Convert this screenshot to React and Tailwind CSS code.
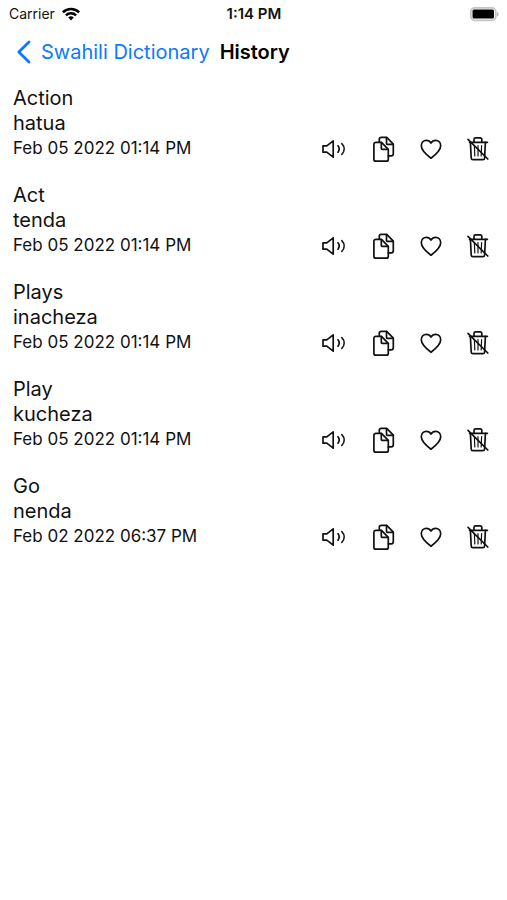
import React, { useState } from 'react';

const initialHistory = [
  { id: 1, word: 'Action', translation: 'hatua', date: 'Feb 05 2022 01:14 PM' },
  { id: 2, word: 'Act', translation: 'tenda', date: 'Feb 05 2022 01:14 PM' },
  { id: 3, word: 'Plays', translation: 'inacheza', date: 'Feb 05 2022 01:14 PM' },
  { id: 4, word: 'Play', translation: 'kucheza', date: 'Feb 05 2022 01:14 PM' },
  { id: 5, word: 'Go', translation: 'nenda', date: 'Feb 02 2022 06:37 PM' }
];

const Icon = ({ children }) => (
  <svg
    viewBox="0 0 28 28"
    className="size-7"
    fill="none"
    stroke="currentColor"
    strokeWidth="1.7"
    strokeLinecap="round"
    strokeLinejoin="round"
    aria-hidden="true"
  >
    {children}
  </svg>
);

const SpeakerIcon = () => (
  <Icon>
    <path d="M2 10.8h3.8l6.4-5v16.4l-6.4-5H2z" />
    <path d="M17 10.8c1.5 2 1.5 4.4 0 6.4" />
    <path d="M20.8 8.6c3.2 3.2 3.2 7.6 0 10.8" strokeWidth="1.5" />
  </Icon>
);

const CopyIcon = () => (
  <Icon>
    <path d="M10.3 7V4.3a2 2 0 0 1 2-2h5.4l6.6 6.9v9.6a2 2 0 0 1-2 2h-3" />
    <path d="M17.5 2.6v6a.8.8 0 0 0 .8.8h5.8" />
    <path d="M6.9 7.3h5.6l6.8 7v9.9a2 2 0 0 1-2 2H6.9a2 2 0 0 1-2-2V9.3a2 2 0 0 1 2-2z" />
    <path d="M12.3 7.6v6a.8.8 0 0 0 .8.8H19" />
  </Icon>
);

const HeartIcon = () => (
  <Icon>
    <path d="M14 23.2C9.8 20 4.3 15.8 4.3 10.7c0-3 2.2-5.4 5-5.4 2 0 3.7 1 4.7 2.8 1-1.8 2.7-2.8 4.7-2.8 2.8 0 5 2.4 5 5.4 0 5.1-5.5 9.3-9.7 12.5z" />
  </Icon>
);

const DeleteIcon = () => (
  <Icon>
    <path d="M4.6 7.3h17.8" />
    <path d="M9 7V4.4a1.5 1.5 0 0 1 1.5-1.5h4.8a1.5 1.5 0 0 1 1.5 1.5V7" />
    <path d="M5.4 7.4l.8 15.6a1.8 1.8 0 0 0 1.8 1.7h9.8a1.8 1.8 0 0 0 1.8-1.7l.8-15.6" />
    <path d="M9.4 10.6l.4 10.4M13 10.6V21M16.6 10.6L16.2 21" strokeWidth="1.2" />
    <path d="M3 4.4l19.8 19.6" />
  </Icon>
);

const StatusBar = () => (
  <div className="grid grid-cols-3 items-center h-7 pl-[9px] pr-2 text-sm">
    <div className="flex items-center gap-[7px]">
      <span>Carrier</span>
      <svg viewBox="0 0 18 14" className="w-[18px] h-[14px]" fill="none" stroke="black" strokeWidth="2.5" aria-hidden="true">
        <path d="M.9 5.3a11.4 11.4 0 0 1 16.2 0" />
        <path d="M3.9 8.4a7.2 7.2 0 0 1 10.2 0" />
        <path d="M9 13.4L6.2 10.6a4 4 0 0 1 5.6 0z" fill="black" stroke="none" />
      </svg>
    </div>
    <span className="text-center text-[15px] font-semibold">1:14 PM</span>
    <svg viewBox="0 0 31 15" className="w-[31px] h-[15px] justify-self-end" aria-hidden="true">
      <rect x="2.8" y=".9" width="25" height="12.4" rx="4" fill="white" stroke="#c4c4c4" strokeWidth="1.8" />
      <rect x="4.5" y="2.6" width="21.5" height="9" rx="1.5" fill="black" />
      <path d="M29 5c2 .6 2 4 0 4.6z" fill="#b5b5b5" />
    </svg>
  </div>
);

const HistoryItem = ({ item, onDelete }) => (
  <li className="pt-[10px] pb-3 pl-[13px] pr-[14px]">
    <p className="text-xl leading-[25px]">{item.word}</p>
    <p className="text-xl leading-[25px]">{item.translation}</p>
    <div className="flex items-center justify-between h-[25px]">
      <p className="text-[17px] leading-[25px]">{item.date}</p>
      <div className="flex items-center gap-5">
        <button type="button" aria-label={`Listen to ${item.word}`}><SpeakerIcon /></button>
        <button type="button" aria-label={`Copy ${item.word}`}><CopyIcon /></button>
        <button type="button" aria-label={`Save ${item.word}`}><HeartIcon /></button>
        <button type="button" aria-label={`Delete ${item.word}`} onClick={() => onDelete(item.id)}><DeleteIcon /></button>
      </div>
    </div>
  </li>
);

const App = () => {
  const [history, setHistory] = useState(initialHistory);

  const handleDelete = (id) => {
    setHistory(history.filter((item) => item.id !== id));
  };

  return (
    <div className="min-h-screen bg-white text-[#111111] font-['Inter',sans-serif]">
      <StatusBar />
      <header className="flex items-center gap-[10px] h-12 pl-4">
        <a href="#dictionary" className="flex items-center gap-[10px] text-xl text-[#0a7aff]">
          <svg viewBox="0 0 15 24" className="w-[15px] h-6" fill="none" stroke="currentColor" strokeWidth="2.8" strokeLinecap="round" strokeLinejoin="round" aria-hidden="true">
            <path d="M13 2L2.8 12L13 22" />
          </svg>
          Swahili Dictionary
        </a>
        <h1 className="text-xl font-semibold text-black">History</h1>
      </header>
      <ul>
        {history.map((item) => (
          <HistoryItem key={item.id} item={item} onDelete={handleDelete} />
        ))}
      </ul>
    </div>
  );
};

export default App;
